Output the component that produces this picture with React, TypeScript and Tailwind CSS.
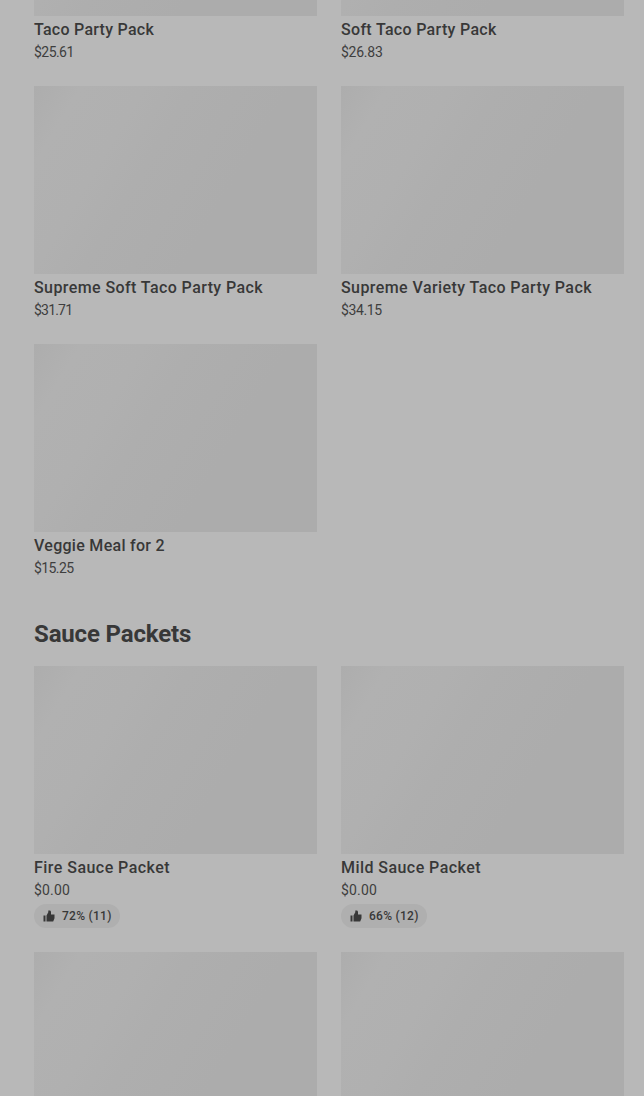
import React from "react";

type Item = {
  name: string;
  price: string;
  nameSpacing: string;
  priceSpacing: string;
  rating?: string;
};

const partyPacks: Item[] = [
  { name: "Taco Party Pack", price: "$25.61", nameSpacing: "tracking-[0.26px]", priceSpacing: "tracking-[-0.55px]" },
  { name: "Soft Taco Party Pack", price: "$26.83", nameSpacing: "tracking-[0.31px]", priceSpacing: "tracking-[-0.25px]" },
  { name: "Supreme Soft Taco Party Pack", price: "$31.71", nameSpacing: "tracking-[0.41px]", priceSpacing: "tracking-[-0.8px]" },
  { name: "Supreme Variety Taco Party Pack", price: "$34.15", nameSpacing: "tracking-[0.42px]", priceSpacing: "tracking-[-0.4px]" },
  { name: "Veggie Meal for 2", price: "$15.25", nameSpacing: "tracking-[0.29px]", priceSpacing: "tracking-[-0.6px]" },
];

const saucePackets: Item[] = [
  { name: "Fire Sauce Packet", price: "$0.00", nameSpacing: "tracking-[0.46px]", priceSpacing: "tracking-[0.15px]", rating: "72% (11)" },
  { name: "Mild Sauce Packet", price: "$0.00", nameSpacing: "tracking-[0.44px]", priceSpacing: "tracking-[0.15px]", rating: "66% (12)" },
];

const Thumbnail: React.FC = () => (
  <div className="h-[188px] bg-[linear-gradient(121deg,#adadad_0%,#b1b1b1_12%,#b0b0b0_28%,#aeaeae_40%,#acacac_65%,#acacac_100%)]" />
);

const ThumbUp: React.FC = () => (
  <svg width="12" height="12" viewBox="0 0 12 12" fill="currentColor" aria-hidden="true">
    <path d="M0.5 5.5h2v6h-2z" />
    <path d="M3.5 5.5L5.3 2.2V0.5h1.2c0.9 0 1.5 0.6 1.5 1.5v2.5h3.5v3.7l-1.3 3.3H3.5z" />
  </svg>
);

const MenuItem: React.FC<{ item: Item }> = ({ item }) => (
  <li>
    <Thumbnail />
    <h3 className={`mt-0.5 text-base leading-6 font-medium whitespace-nowrap ${item.nameSpacing}`}>
      {item.name}
    </h3>
    <p className={`text-sm leading-5 text-[#3e3e3e] ${item.priceSpacing}`}>{item.price}</p>
    {item.rating && (
      <div className="mt-1 inline-flex h-6 items-center gap-[7px] rounded-full bg-[#afafaf] pr-2 pl-[9px] align-top text-xs font-medium">
        <ThumbUp />
        <span className="tracking-[0.28px]">{item.rating}</span>
      </div>
    )}
  </li>
);

export default function App() {
  return (
    <main className="h-[1096px] overflow-hidden bg-[#b8b8b8] pr-5 pl-[34px] font-['Roboto','Liberation_Sans',sans-serif] text-[#383838]">
      <ul className="-mt-[172px] grid grid-cols-2 gap-6">
        {partyPacks.map((item) => (
          <MenuItem key={item.name} item={item} />
        ))}
      </ul>
      <h2 className="mt-10 mb-4 text-2xl leading-8 font-bold tracking-[-0.15px]">
        Sauce Packets
      </h2>
      <ul className="grid grid-cols-2 gap-6">
        {saucePackets.map((item) => (
          <MenuItem key={item.name} item={item} />
        ))}
        <li>
          <Thumbnail />
        </li>
        <li>
          <Thumbnail />
        </li>
      </ul>
    </main>
  );
}
